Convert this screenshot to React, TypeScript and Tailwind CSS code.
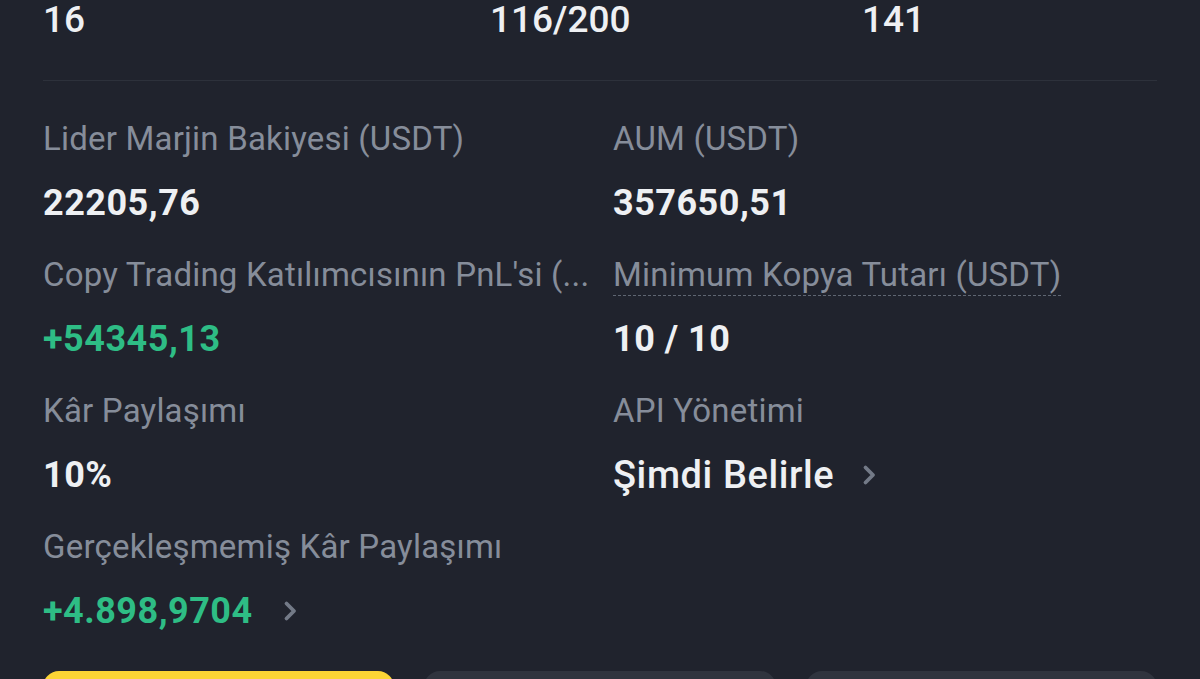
const FONT = { fontFamily: 'Roboto, "Noto Sans", sans-serif' }

type Stat = {
  label: string
  value: string
  tone?: 'white' | 'green'
  dashed?: boolean
  chevron?: boolean
  plain?: boolean
}

const stats: Stat[] = [
  { label: 'Lider Marjin Bakiyesi (USDT)', value: '22205,76' },
  { label: 'AUM (USDT)', value: '357650,51' },
  { label: "Copy Trading Katılımcısının PnL'si (...", value: '+54345,13', tone: 'green' },
  { label: 'Minimum Kopya Tutarı (USDT)', value: '10 / 10', dashed: true },
  { label: 'Kâr Paylaşımı', value: '10%' },
  { label: 'API Yönetimi', value: 'Şimdi Belirle', chevron: true, plain: true },
  { label: 'Gerçekleşmemiş Kâr Paylaşımı', value: '+4.898,9704', tone: 'green', chevron: true },
]

function Chevron() {
  return (
    <svg width="15" height="22" viewBox="0 0 15 22" className="shrink-0">
      <polyline
        points="3.5,3.5 11,11 3.5,18.5"
        fill="none"
        stroke="#737a87"
        strokeWidth="3.8"
        strokeLinecap="round"
        strokeLinejoin="round"
      />
    </svg>
  )
}

function StatCell({ s }: { s: Stat }) {
  return (
    <div className="flex min-w-0 flex-col">
      <div className="h-[32px] whitespace-nowrap text-[33px] leading-[32px] tracking-[0.2px] text-[#868d9a]">
        {s.dashed ? (
          <span className="underline decoration-[#5f6672] decoration-dashed decoration-1 underline-offset-[9px]">
            {s.label}
          </span>
        ) : (
          s.label
        )}
      </div>
      <div className={`mt-[30px] flex h-[36px] items-center ${s.plain ? 'gap-[28px]' : 'gap-[30px]'}`}>
        <span
          className={`whitespace-nowrap leading-none ${
            s.plain ? 'text-[38px] font-medium tracking-[0.6px]' : 'text-[36px] font-bold tracking-[0.5px]'
          } ${s.tone === 'green' ? 'text-[#2ebd85]' : 'text-[#eef0f3]'}`}
        >
          {s.value}
        </span>
        {s.chevron && <Chevron />}
      </div>
    </div>
  )
}

export default function App() {
  return (
    <div className="h-[679px] w-[1200px] overflow-hidden bg-[#20232d] px-[43px]" style={FONT}>
      <div className="flex h-[81px] items-start border-b border-[#2d313b] pt-[1px] text-[37px] font-medium leading-none text-[#eef0f3]">
        <span className="w-[447px]">16</span>
        <span className="w-[372px]">116/200</span>
        <span>141</span>
      </div>

      <div className="grid grid-cols-2 gap-x-[26px] gap-y-[38px] pt-[42px]">
        {stats.map((s) => (
          <StatCell key={s.label} s={s} />
        ))}
      </div>

      <div className="mt-[42px] flex gap-[30px]">
        <div className="h-[60px] flex-1 rounded-[16px] bg-[#fcd535]" />
        <div className="h-[60px] flex-1 rounded-[16px] bg-[#30343e]" />
        <div className="h-[60px] flex-1 rounded-[16px] bg-[#30343e]" />
      </div>
    </div>
  )
}
